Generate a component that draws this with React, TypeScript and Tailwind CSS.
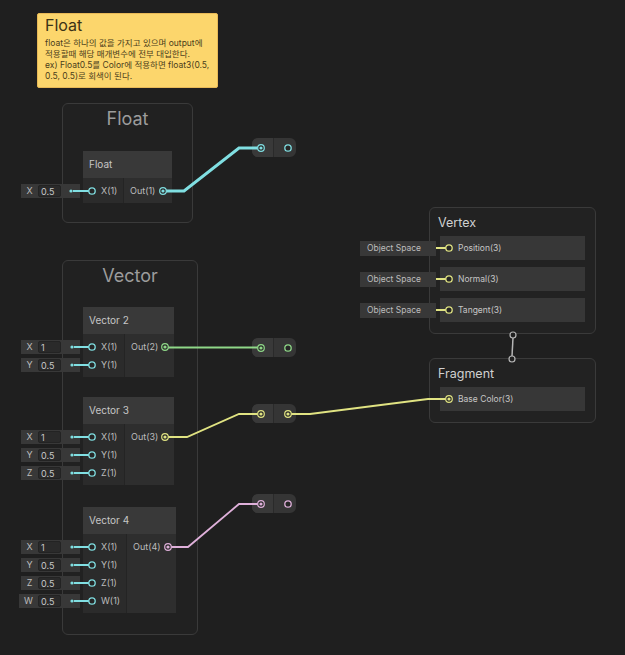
import React from 'react';

const CYAN = '#80dfe2';
const GREEN = '#8fd888';
const YELLOW = '#e0e382';
const PINK = '#dfb0da';
const GRAY = '#b5b5b5';

type Field = { label: string; value: string; wide?: boolean };
type Input = { port: string; field: Field };

// A shader node with its inline value fields on the left
const NodeCluster = ({
  x,
  y,
  w,
  split,
  title,
  inputs,
  out,
}: {
  x: number;
  y: number;
  w: number;
  split: number;
  title: string;
  inputs: Input[];
  out: string;
}) => (
  <div className="absolute flex" style={{ left: x, top: y }}>
    {/* inline fields */}
    <div className="flex flex-col items-end pt-[31px] pr-[3px]" style={{ width: 83 - x }}>
      {inputs.map((i) => (
        <div key={i.port} className="h-[18px] flex items-center">
          <div className={`h-[14px] flex items-center bg-[#383838] text-[9px] ${i.field.wide ? 'w-[61px]' : 'w-[59px]'}`}>
            <span className={`text-center text-[#bdbdbd] ${i.field.wide ? 'w-[19px]' : 'w-[17px]'}`}>{i.field.label}</span>
            <span className="w-[23px] h-[12px] leading-[11px] bg-[#2a2a2a] border border-[#232323] rounded-[2px] pl-[2px] text-[#c8c8c8]">
              {i.field.value}
            </span>
          </div>
        </div>
      ))}
    </div>

    {/* node */}
    <div className="flex flex-col" style={{ width: w }}>
      <div className="h-[27px] bg-[#393939] flex items-center pl-[6px] text-[10px] text-[#c6c6c6]">{title}</div>
      <div className="flex">
        <div className="bg-[#2b2b2b] pt-[4px] pb-[3px]" style={{ width: split }}>
          {inputs.map((i) => (
            <div key={i.port} className="h-[18px] flex items-center pl-[18px] text-[9px] text-[#bdbdbd]">
              {i.port}
            </div>
          ))}
        </div>
        <div className="flex-1 bg-[#2e2e2e] border-l border-[#242424] pt-[4px]">
          <div className="h-[18px] flex items-center pl-[6px] text-[9px] text-[#bdbdbd]">{out}</div>
        </div>
      </div>
    </div>
  </div>
);

const Group = ({ x, y, w, h, title }: { x: number; y: number; w: number; h: number; title: string }) => (
  <div
    className="absolute rounded-[6px] border-[1.5px] border-[#3a3a3a] bg-[#212121]"
    style={{ left: x, top: y, width: w, height: h }}
  >
    <div className="h-[28px] flex items-center justify-center text-[18px] text-[#9c9c9c]">{title}</div>
  </div>
);

const Redirect = ({ cy }: { cy: number }) => (
  <div className="absolute left-[252px] w-[44px] h-[19px] rounded-[6px] bg-[#353535] flex overflow-hidden" style={{ top: cy - 9.5 }}>
    <div className="w-[22px] h-full bg-[#393939] border-r border-[#2a2a2a]" />
    <div className="flex-1" />
  </div>
);

// Master stack block, optional space labels hanging off its left edge
const ContextBlock = ({ y, title, rows, spaces }: { y: number; title: string; rows: string[]; spaces?: boolean }) => (
  <div className="absolute left-[360px] flex" style={{ top: y }}>
    <div className="relative z-10 w-[76px] -mr-[7px] flex flex-col gap-[7px] pt-[29px]">
      {spaces &&
        rows.map((r) => (
          <div key={r} className="h-[24px] flex items-center">
            <div className="w-full h-[15px] bg-[#383838] flex items-center pl-[7px] text-[8.5px] text-[#bdbdbd]">Object Space</div>
          </div>
        ))}
    </div>
    <div className="w-[167px] rounded-[6px] border border-[#3a3a3a] bg-[#222222] pb-[11px]">
      <div className="h-[28px] flex items-center pl-[8px] pt-[2px] text-[12.5px] text-[#d0d0d0]">{title}</div>
      <div className="flex flex-col gap-[7px] px-[10px]">
        {rows.map((r) => (
          <div key={r} className="h-[24px] bg-[#373737] flex items-center pl-[18px] text-[8.5px] text-[#c6c6c6]">
            {r}
          </div>
        ))}
      </div>
    </div>
  </div>
);

const InPort = ({ x, y, c }: { x: number; y: number; c: string }) => (
  <circle cx={x} cy={y} r={3.2} fill="#262626" stroke={c} strokeWidth={1.3} />
);
const OutPort = ({ x, y, c }: { x: number; y: number; c: string }) => (
  <g>
    <circle cx={x} cy={y} r={3.3} fill="#2a2a2a" stroke={c} strokeWidth={1.2} />
    <circle cx={x} cy={y} r={1.6} fill={c} />
  </g>
);
const Feed = ({ x1, x2, y, c }: { x1: number; x2: number; y: number; c: string }) => (
  <g>
    <circle cx={x1} cy={y} r={1.6} fill={c} />
    <line x1={x1 + 2} y1={y} x2={x2 - 3} y2={y} stroke={c} strokeWidth={2} />
    <InPort x={x2} y={y} c={c} />
  </g>
);

const f = (label: string, value: string, wide = false): Field => ({ label, value, wide });

export default function App() {
  return (
    <div className="relative w-[625px] h-[655px] bg-[#1f1f1f] overflow-hidden" style={{ fontFamily: 'Inter, "Noto Sans CJK KR", sans-serif' }}>
      {/* Sticky note */}
      <div className="absolute left-[37px] top-[13px] w-[181px] h-[75px] bg-[#fcd66c] border border-[#e8b957] rounded-[2px] px-[7px] pt-[1px]">
        <div className="text-[16px] leading-[20px] text-[#3b3216]">Float</div>
        <div className="mt-[3px] text-[8.5px] leading-[11px] text-[#4a3d1b] whitespace-nowrap">
          <div>float은 하나의 값을 가지고 있으며 output에</div>
          <div>적용할때 해당 매개변수에 전부 대입한다.</div>
          <div>ex) Float0.5를 Color에 적용하면 float3(0.5,</div>
          <div>0.5, 0.5)로 회색이 된다.</div>
        </div>
      </div>

      {/* Groups */}
      <Group x={62} y={103} w={131} h={120} title="Float" />
      <Group x={62} y={260} w={136} h={375} title="Vector" />

      {/* Nodes */}
      <NodeCluster x={21} y={151} w={89} split={40} title="Float" out="Out(1)" inputs={[{ port: 'X(1)', field: f('X', '0.5') }]} />
      <NodeCluster
        x={21}
        y={307}
        w={91}
        split={41}
        title="Vector 2"
        out="Out(2)"
        inputs={[
          { port: 'X(1)', field: f('X', '1') },
          { port: 'Y(1)', field: f('Y', '0.5') },
        ]}
      />
      <NodeCluster
        x={21}
        y={397}
        w={91}
        split={41}
        title="Vector 3"
        out="Out(3)"
        inputs={[
          { port: 'X(1)', field: f('X', '1') },
          { port: 'Y(1)', field: f('Y', '0.5') },
          { port: 'Z(1)', field: f('Z', '0.5') },
        ]}
      />
      <NodeCluster
        x={19}
        y={507}
        w={93}
        split={43}
        title="Vector 4"
        out="Out(4)"
        inputs={[
          { port: 'X(1)', field: f('X', '1') },
          { port: 'Y(1)', field: f('Y', '0.5') },
          { port: 'Z(1)', field: f('Z', '0.5') },
          { port: 'W(1)', field: f('W', '0.5', true) },
        ]}
      />

      {/* Redirect nodes */}
      <Redirect cy={147.5} />
      <Redirect cy={347.5} />
      <Redirect cy={413.5} />
      <Redirect cy={503.5} />

      {/* Master stack */}
      <ContextBlock y={207} title="Vertex" rows={['Position(3)', 'Normal(3)', 'Tangent(3)']} spaces />
      <ContextBlock y={358} title="Fragment" rows={['Base Color(3)']} />

      {/* Wires and ports */}
      <svg className="absolute inset-0 pointer-events-none" width={625} height={655}>
        {/* Float */}
        <polyline points="166,191 184,191 239,148 258,148" fill="none" stroke={CYAN} strokeWidth={3} />
        <Feed x1={71} x2={92} y={191} c={CYAN} />
        <OutPort x={163} y={191} c={CYAN} />
        <OutPort x={261} y={148} c={CYAN} />
        <InPort x={288} y={148} c={CYAN} />

        {/* Vector 2 */}
        <line x1={168} y1={347.5} x2={258} y2={347.5} stroke={GREEN} strokeWidth={1.8} />
        <Feed x1={72} x2={92} y={347} c={CYAN} />
        <Feed x1={72} x2={92} y={365} c={CYAN} />
        <OutPort x={165} y={347} c={GREEN} />
        <OutPort x={261} y={348} c={GREEN} />
        <InPort x={288} y={348} c={GREEN} />

        {/* Vector 3 */}
        <polyline points="168,437 187,437 239,414 258,414" fill="none" stroke={YELLOW} strokeWidth={1.8} />
        <polyline points="291,414 310,414 428,399 446,399" fill="none" stroke={YELLOW} strokeWidth={1.8} />
        <Feed x1={72} x2={92} y={437} c={CYAN} />
        <Feed x1={72} x2={92} y={455} c={CYAN} />
        <Feed x1={72} x2={92} y={473} c={CYAN} />
        <OutPort x={165} y={437} c={YELLOW} />
        <OutPort x={261} y={414} c={YELLOW} />
        <OutPort x={288} y={414} c={YELLOW} />

        {/* Vector 4 */}
        <polyline points="171,547 188,547 239,504 258,504" fill="none" stroke={PINK} strokeWidth={1.8} />
        <Feed x1={72} x2={92} y={547} c={CYAN} />
        <Feed x1={72} x2={92} y={565} c={CYAN} />
        <Feed x1={72} x2={92} y={583} c={CYAN} />
        <Feed x1={72} x2={92} y={601} c={CYAN} />
        <OutPort x={168} y={547} c={PINK} />
        <OutPort x={261} y={504} c={PINK} />
        <InPort x={288} y={504} c={PINK} />

        {/* Vertex inputs */}
        <Feed x1={428} x2={449} y={248} c={YELLOW} />
        <Feed x1={428} x2={449} y={279} c={YELLOW} />
        <Feed x1={428} x2={449} y={310} c={YELLOW} />

        {/* Fragment */}
        <OutPort x={449} y={399} c={YELLOW} />

        {/* Vertex -> Fragment flow */}
        <line x1={513} y1={338} x2={512} y2={356} stroke={GRAY} strokeWidth={1.5} />
        <circle cx={513} cy={335} r={3} fill="#202020" stroke={GRAY} strokeWidth={1.2} />
        <circle cx={512} cy={359} r={3} fill="#202020" stroke={GRAY} strokeWidth={1.2} />
      </svg>
    </div>
  );
}
